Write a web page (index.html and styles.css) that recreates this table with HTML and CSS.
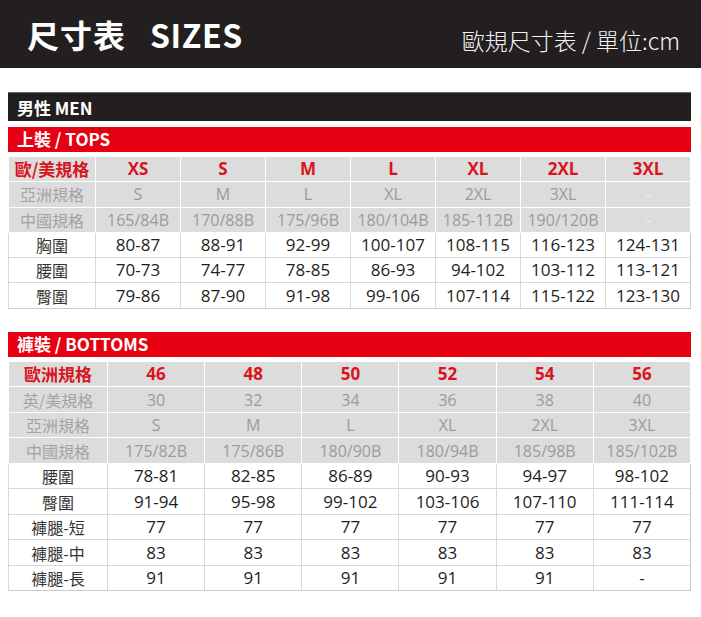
FILE: index.html
```html
<!DOCTYPE html>
<html lang="zh-Hant">
<head>
<meta charset="utf-8">
<title>尺寸表 SIZES</title>
<link rel="stylesheet" href="styles.css">
</head>
<body>
<header class="top">
  <h1 class="title">尺寸表<span class="sizes">SIZES</span></h1>
  <div class="unit">歐規尺寸表 / 單位:cm</div>
</header>
<main class="content">
  <div class="bar bar-black">男性 MEN</div>
  <div class="bar bar-red">上裝 / TOPS</div>
  <table class="chart chart-tops">
    <colgroup><col class="c-label-t"><col><col><col><col><col><col><col></colgroup>
    <tr class="head"><th>歐/美規格</th><th>XS</th><th>S</th><th>M</th><th>L</th><th>XL</th><th>2XL</th><th>3XL</th></tr>
    <tr class="gray"><td>亞洲規格</td><td>S</td><td>M</td><td>L</td><td>XL</td><td>2XL</td><td>3XL</td><td class="dash">-</td></tr>
    <tr class="gray"><td>中國規格</td><td>165/84B</td><td>170/88B</td><td>175/96B</td><td>180/104B</td><td>185-112B</td><td>190/120B</td><td class="dash">-</td></tr>
    <tr class="data"><td>胸圍</td><td>80-87</td><td>88-91</td><td>92-99</td><td>100-107</td><td>108-115</td><td>116-123</td><td>124-131</td></tr>
    <tr class="data"><td>腰圍</td><td>70-73</td><td>74-77</td><td>78-85</td><td>86-93</td><td>94-102</td><td>103-112</td><td>113-121</td></tr>
    <tr class="data"><td>臀圍</td><td>79-86</td><td>87-90</td><td>91-98</td><td>99-106</td><td>107-114</td><td>115-122</td><td>123-130</td></tr>
  </table>

  <div class="bar bar-red bar-bottoms">褲裝 / BOTTOMS</div>
  <table class="chart chart-bottoms">
    <colgroup><col class="c-label-b"><col><col><col><col><col><col></colgroup>
    <tr class="head"><th>歐洲規格</th><th>46</th><th>48</th><th>50</th><th>52</th><th>54</th><th>56</th></tr>
    <tr class="gray"><td>英/美規格</td><td>30</td><td>32</td><td>34</td><td>36</td><td>38</td><td>40</td></tr>
    <tr class="gray"><td>亞洲規格</td><td>S</td><td>M</td><td>L</td><td>XL</td><td>2XL</td><td>3XL</td></tr>
    <tr class="gray"><td>中國規格</td><td>175/82B</td><td>175/86B</td><td>180/90B</td><td>180/94B</td><td>185/98B</td><td>185/102B</td></tr>
    <tr class="data"><td>腰圍</td><td>78-81</td><td>82-85</td><td>86-89</td><td>90-93</td><td>94-97</td><td>98-102</td></tr>
    <tr class="data"><td>臀圍</td><td>91-94</td><td>95-98</td><td>99-102</td><td>103-106</td><td>107-110</td><td>111-114</td></tr>
    <tr class="data"><td>褲腿-短</td><td>77</td><td>77</td><td>77</td><td>77</td><td>77</td><td>77</td></tr>
    <tr class="data"><td>褲腿-中</td><td>83</td><td>83</td><td>83</td><td>83</td><td>83</td><td>83</td></tr>
    <tr class="data"><td>褲腿-長</td><td>91</td><td>91</td><td>91</td><td>91</td><td>91</td><td>-</td></tr>
  </table>
</main>
</body>
</html>
```

FILE: styles.css
```css
html, body {
  margin: 0;
  padding: 0;
  background: #ffffff;
}

body {
  font-family: "Open Sans", "Noto Sans CJK TC", sans-serif;
  color: #1e1e1e;
}

.top {
  height: 68px;
  background: #231f20;
  display: flex;
  align-items: center;
  justify-content: space-between;
  padding: 0 21px 0 27px;
  box-sizing: border-box;
}

.title {
  margin: 0;
  font-family: "Noto Sans CJK TC", sans-serif;
  font-weight: 700;
  font-size: 32px;
  color: #ffffff;
  letter-spacing: 1px;
  line-height: 1;
  padding-bottom: 0;
}

.sizes {
  margin-left: 24px;
  letter-spacing: 0.6px;
}

.unit {
  font-family: "Noto Sans CJK TC", sans-serif;
  font-weight: 300;
  font-size: 23px;
  color: #f4f4f4;
  line-height: 1;
  padding-top: 12px;
}

.content {
  padding: 24px 10px 20px 8px;
}

.bar {
  font-family: "Noto Sans CJK TC", sans-serif;
  font-weight: 700;
  color: #ffffff;
  font-size: 17px;
  padding-left: 9px;
  box-sizing: border-box;
}

.bar-black {
  background: #231f20;
  height: 29px;
  line-height: 29px;
  border-top: 1px solid #6a6a6a;
}

.bar-red {
  background: #e60012;
  height: 25px;
  line-height: 24px;
  margin-top: 6px;
}

.bar-bottoms {
  margin-top: 23px;
}

.chart {
  width: 100%;
  border-collapse: collapse;
  table-layout: fixed;
  margin-top: 4px;
}

.c-label-t { width: 87px; }
.c-label-b { width: 99px; }

.chart-tops tr { height: 25.3px; }
.chart-bottoms tr { height: 25.5px; }

.chart th,
.chart td {
  padding: 0;
  text-align: center;
  vertical-align: middle;
  white-space: nowrap;
  line-height: 24px;
}

.chart th {
  background: #dcdcdc;
  color: #d9141e;
  font-weight: 700;
  font-size: 17px;
  border: 1px solid #ffffff;
}

.chart th:first-child {
  font-family: "Noto Sans CJK TC", sans-serif;
  font-size: 17px;
}

.gray td {
  background: #dcdcdc;
  color: #9b9b9b;
  font-size: 16px;
  border: 1px solid #ffffff;
}

.gray td.dash {
  color: #f2f2f2;
}

.gray td:first-child {
  font-family: "Noto Sans CJK TC", sans-serif;
  font-weight: 400;
  font-size: 16px;
  color: #a3a3a3;
}

.data td {
  background: #ffffff;
  color: #1e1e1e;
  font-size: 17px;
  border: 1px solid #d9d9d9;
}

.data td:first-child {
  font-family: "Noto Sans CJK TC", sans-serif;
  font-size: 16px;
  color: #333333;
}

.data:last-child td {
  border-bottom-color: #c9c9c9;
}

.data td:last-child {
  border-right-color: #c9c9c9;
}
```
